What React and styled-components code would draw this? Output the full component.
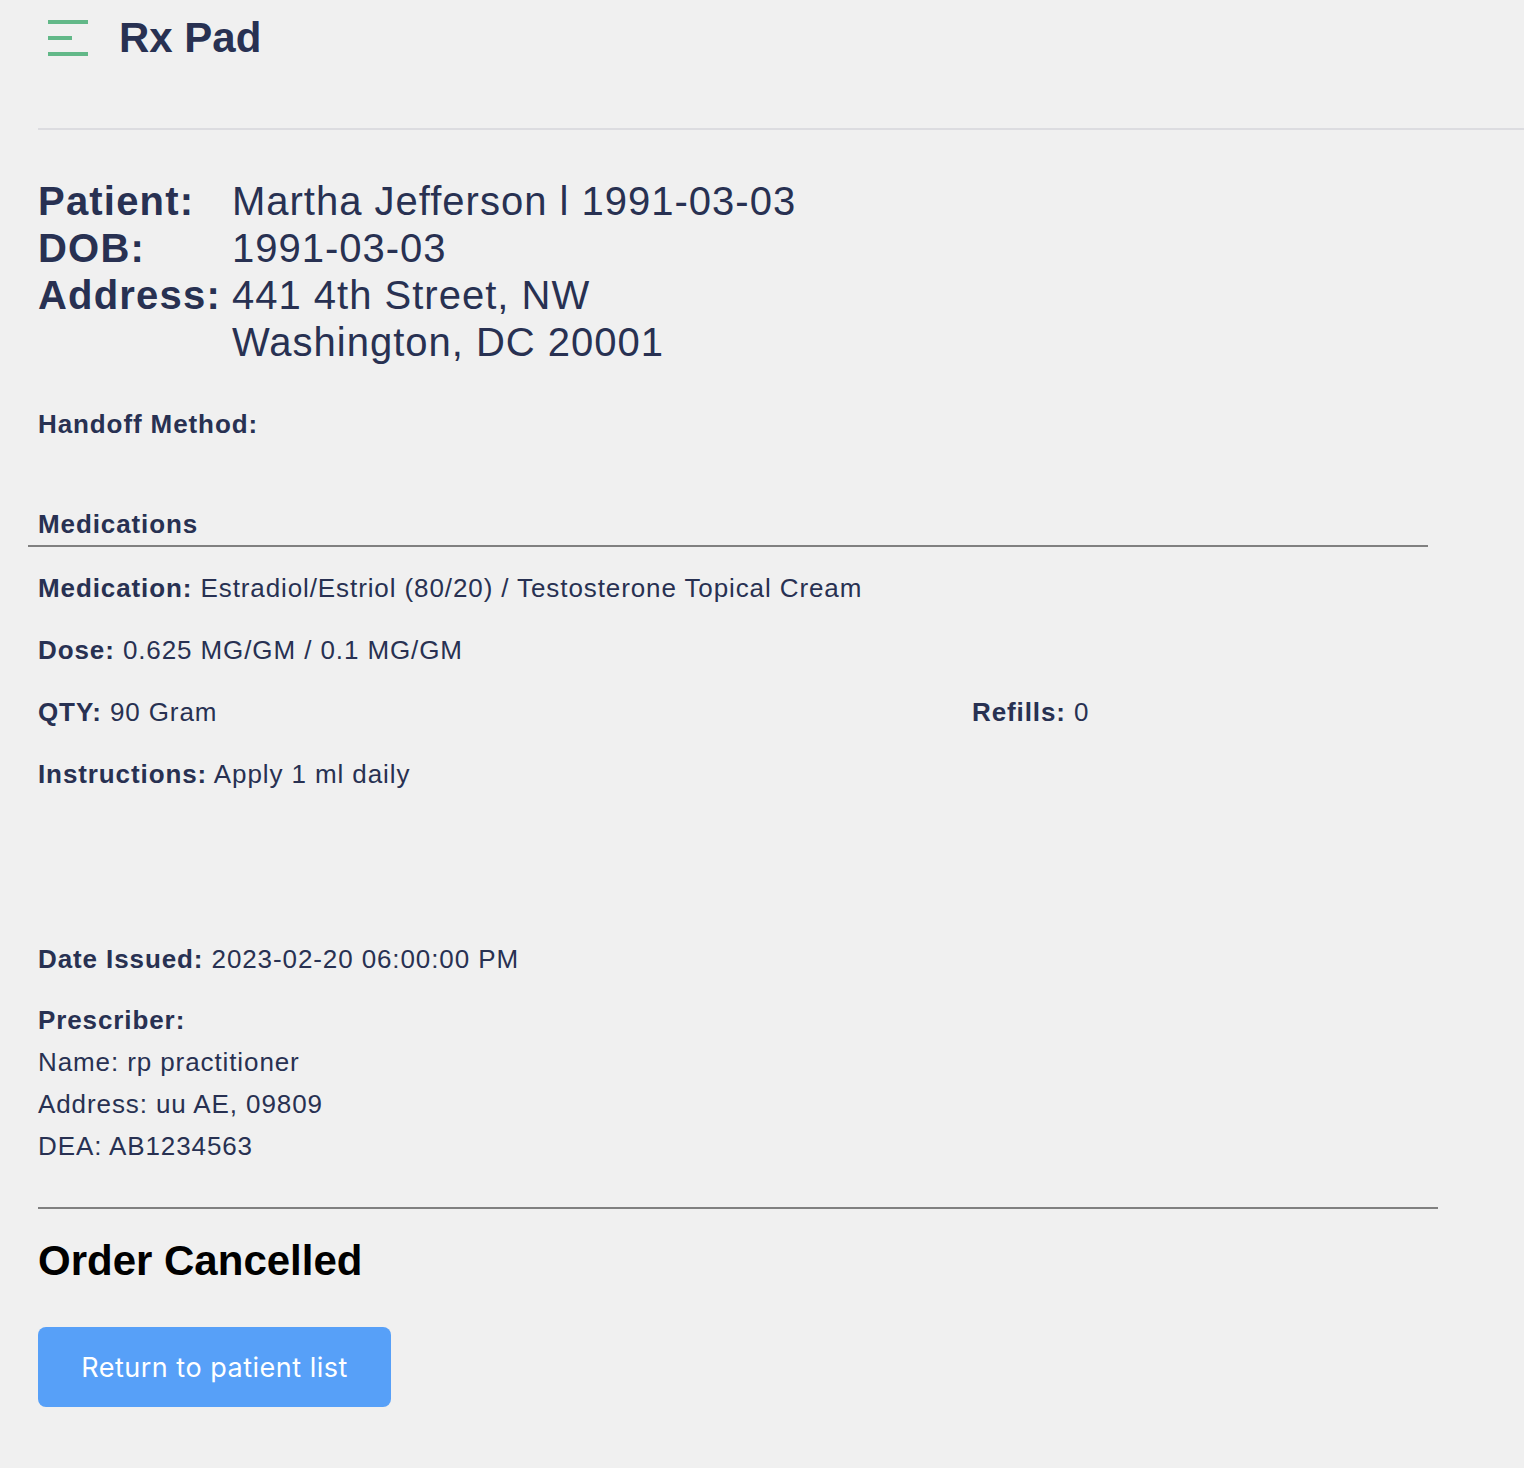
import styled, { createGlobalStyle } from "styled-components";

const GlobalStyle = createGlobalStyle`
    body {
        margin: 0;
        background-color: #F0F0F0;
        font-family: "Liberation Sans", Arial, sans-serif;
        color: #283152;
    }
`;

const Page = styled.div`
    padding-left: 38px;
    padding-bottom: 60px;
`;

const Header = styled.div`
    display: flex;
    align-items: center;
    height: 76px;
`;

const MenuButton = styled.div`
    display: flex;
    flex-direction: column;
    justify-content: space-between;
    width: 40px;
    height: 36px;
    margin: 0 31px 0 10px;
    cursor: pointer;
`;

const MenuLine = styled.span`
    display: block;
    height: 4px;
    width: ${(props) => (props.short ? "24px" : "40px")};
    background-color: #62B888;
`;

const Title = styled.h1`
    margin: 0;
    font-size: 42px;
    line-height: 48px;
    font-weight: 700;
`;

const HeaderDivider = styled.hr`
    margin: 52px 0 0;
    border: none;
    height: 2px;
    background-color: #DCDCE0;
`;

const PatientGrid = styled.div`
    display: grid;
    grid-template-columns: auto 1fr;
    column-gap: 11px;
    margin-top: 48px;
    font-size: 40px;
    line-height: 47px;
    letter-spacing: 1px;
`;

const PatientLabel = styled.div`
    font-weight: 700;
    letter-spacing: 1.2px;
`;

const PatientValue = styled.div``;

const Label = styled.div`
    font-size: 26px;
    line-height: 42px;
    font-weight: 700;
    letter-spacing: 0.9px;
    margin-top: ${(props) => props.top || 0}px;
`;

const Section = styled.div`
    width: 1400px;
    margin-left: -10px;
    margin-top: 58px;
`;

const SectionTitle = styled(Label)`
    padding-left: 10px;
`;

const SectionRule = styled.hr`
    margin: 0;
    border: none;
    height: 2px;
    background-color: #808080;
`;

const MedList = styled.div`
    display: flex;
    flex-direction: column;
    gap: 20px;
    padding: 20px 0 0 10px;
`;

const MedRow = styled.div`
    display: grid;
    grid-template-columns: 934px 1fr;
`;

const Field = styled.div`
    font-size: 26px;
    line-height: 42px;
    letter-spacing: 0.9px;
    margin-top: ${(props) => props.top || 0}px;
    b {
        font-weight: 700;
    }
`;

const Prescriber = styled.div`
    margin-top: 19px;
    font-size: 26px;
    line-height: 42px;
    letter-spacing: 0.9px;
`;

const BottomRule = styled.hr`
    width: 1400px;
    margin: 40px 0 0;
    border: none;
    height: 2px;
    background-color: #808080;
`;

const Status = styled.h2`
    margin: 28px 0 0;
    font-size: 42px;
    line-height: 48px;
    font-weight: 700;
    color: #000000;
`;

const ReturnButton = styled.button`
    margin-top: 42px;
    width: 353px;
    height: 80px;
    border: none;
    border-radius: 8px;
    background-color: #57A0F8;
    color: #FFFFFF;
    font-family: Inter, "Open Sans", sans-serif;
    font-size: 27px;
    letter-spacing: 0.5px;
    cursor: pointer;
`;

const App = () => {
    const medication = {
        name: "Estradiol/Estriol (80/20) / Testosterone Topical Cream",
        dose: "0.625 MG/GM / 0.1 MG/GM",
        qty: "90 Gram",
        refills: 0,
        instructions: "Apply 1 ml daily",
    };
    return (
        <Page>
            <GlobalStyle />
            <Header>
                <MenuButton>
                    <MenuLine />
                    <MenuLine short />
                    <MenuLine />
                </MenuButton>
                <Title>Rx Pad</Title>
            </Header>
            <HeaderDivider />

            <PatientGrid>
                <PatientLabel>Patient:</PatientLabel>
                <PatientValue>Martha Jefferson l 1991-03-03</PatientValue>
                <PatientLabel>DOB:</PatientLabel>
                <PatientValue>1991-03-03</PatientValue>
                <PatientLabel>Address:</PatientLabel>
                <PatientValue>
                    441 4th Street, NW
                    <br />
                    Washington, DC 20001
                </PatientValue>
            </PatientGrid>

            <Label top={37}>Handoff Method:</Label>

            <Section>
                <SectionTitle>Medications</SectionTitle>
                <SectionRule />
                <MedList>
                    <Field><b>Medication:</b> {medication.name}</Field>
                    <Field><b>Dose:</b> {medication.dose}</Field>
                    <MedRow>
                        <Field><b>QTY:</b> {medication.qty}</Field>
                        <Field><b>Refills:</b> {medication.refills}</Field>
                    </MedRow>
                    <Field><b>Instructions:</b> {medication.instructions}</Field>
                </MedList>
            </Section>

            <Field top={143}><b>Date Issued:</b> 2023-02-20 06:00:00 PM</Field>

            <Prescriber>
                <b>Prescriber:</b>
                <div>Name: rp practitioner</div>
                <div>Address: uu AE, 09809</div>
                <div>DEA: AB1234563</div>
            </Prescriber>

            <BottomRule />
            <Status>Order Cancelled</Status>
            <ReturnButton>Return to patient list</ReturnButton>
        </Page>
    );
};

export default App;
